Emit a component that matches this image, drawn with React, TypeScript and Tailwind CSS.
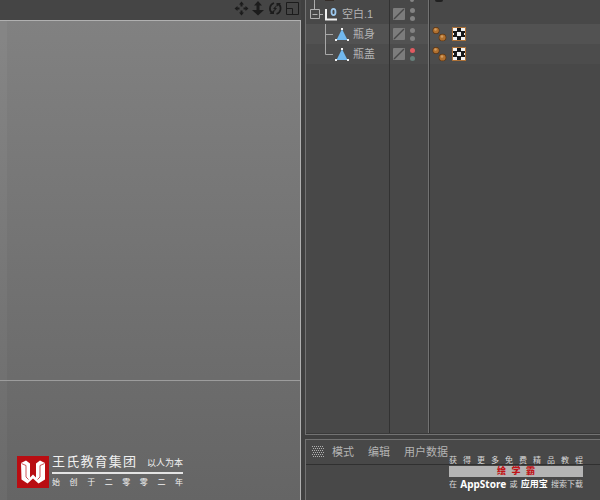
import type { ReactNode } from 'react';

type NodeState = 'default' | 'hidden';

interface SceneNode {
  id: string;
  name: string;
  state: NodeState;
  last: boolean;
}

const children: SceneNode[] = [
  { id: 'body', name: '瓶身', state: 'default', last: false },
  { id: 'cap', name: '瓶盖', state: 'hidden', last: true },
];

const menus = ['模式', '编辑', '用户数据'];

export default function App() {
  return (
    <div className="grid h-screen grid-cols-[301fr_299fr] grid-rows-[minmax(0,1fr)] overflow-hidden bg-[#404040] font-['Liberation_Sans','Noto_Sans_CJK_SC',sans-serif] text-[#b4b4b4]">
      <Viewport />
      <div className="flex min-w-0 flex-col gap-1 pl-1">
        <ObjectManager />
        <AttributePanel />
      </div>
    </div>
  );
}

function Viewport() {
  return (
    <main className="relative flex min-w-0 flex-col border-r border-[#b0b0b0]">
      <div className="-mr-px flex h-5 shrink-0 items-start justify-end gap-px bg-[#454545] pr-px">
        <ViewButton label="平移">
          <path d="M8.500 1.500 11 4.500H9.500V6.500h-2V4.500H6zM8.500 15.500l2.500-3H9.500V10.500h-2v2H6zM1.500 8.500 4.500 6v1.500h2v2h-2V11zM15.500 8.500 12.500 6v1.500h-2v2h2V11z" fill="currentColor" />
        </ViewButton>
        <ViewButton label="缩放">
          <path d="M8 1l4 4.500H9.500v4.500H14L8 15.500 2 10h4.500V5.500H4z" fill="currentColor" />
        </ViewButton>
        <ViewButton label="旋转">
          <path d="M7 3A5.800 5.800 0 0 0 5 13M9.500 14A5.800 5.800 0 0 0 11.500 4" fill="none" stroke="currentColor" strokeWidth="1.700" />
          <path d="M2.500 14h4.500v-4zM14 3H9.500v4zM9 5.500 6 9h1.500L7 12l3-4H8.500z" fill="currentColor" />
        </ViewButton>
        <ViewButton label="切换视图">
          <path d="M2.500 2.500h12v12h-12zM2.500 8.500h6v6" fill="none" stroke="currentColor" />
        </ViewButton>
      </div>
      <div className="flex min-h-0 flex-1 border-t border-[#b0b0b0] bg-linear-to-b from-[#818181] to-[#656565]">
        <div className="w-[7px] bg-white/4" />
      </div>
      <div className="absolute inset-x-0 bottom-[119px] h-px bg-[#9c9c9c]" />
      <CompanyMark />
    </main>
  );
}

function ViewButton({ label, children }: { label: string; children: ReactNode }) {
  return (
    <button aria-label={label} className="text-[#1c1c1c]">
      <svg viewBox="0 0 16 16" className="block size-4">
        {children}
      </svg>
    </button>
  );
}

function Spread({ text, className }: { text: string; className: string }) {
  return (
    <p className={`flex justify-between whitespace-nowrap ${className}`}>
      {Array.from(text).map((char, i) => (
        <span key={i}>{char}</span>
      ))}
    </p>
  );
}

function CompanyMark() {
  return (
    <div className="absolute bottom-3 left-[17px] flex items-end gap-[3px] text-[#f0f0f0]">
      <svg viewBox="0 0 32 32" className="size-8 shrink-0">
        <path d="M0 0h32v32H0z" fill="#b90d12" />
        <path d="M4 7 9 4.500 13 7.500V21.500L16 18.500 19 21.500V7.500L23 4.500 28 7V23.500L21.500 27.500 16 22.500 10.500 27.500 4.500 23.500z" fill="#fff" />
        <path d="M4.500 7.500 9 9.500V21l2.500 2.500M27.500 7.500 23 9.500V21l-2.500 2.500" fill="none" stroke="#b90d12" strokeWidth=".7" />
      </svg>
      <div className="w-[131px]">
        <div className="flex items-end justify-between border-b-2 border-[#e4e4e4] pb-1">
          <Spread text="王氏教育集团" className="w-[84px] text-[13px] leading-[13px]" />
          <p className="text-[9px] leading-[9px]">以人为本</p>
        </div>
        <Spread text="始创于二零零二年" className="pt-1 text-[8px] leading-[10px]" />
      </div>
    </div>
  );
}

function ManagerRow({
  className,
  name,
  layer,
  tags,
}: {
  className: string;
  name?: ReactNode;
  layer?: ReactNode;
  tags?: ReactNode;
}) {
  return (
    <li className={`grid grid-cols-[84px_39px_1fr] ${className}`}>
      <div className="flex items-center overflow-hidden border-r border-[#323232]">{name}</div>
      <div className="flex items-center gap-1 overflow-hidden border-r border-[#727272] pl-[3px]">{layer}</div>
      <div className="flex items-center gap-1 overflow-hidden border-l border-[#323232] pl-px">{tags}</div>
    </li>
  );
}

function ObjectManager() {
  return (
    <section className="flex min-h-0 flex-1 border-b border-l border-[#727272] bg-[#484848]">
      <ul className="flex min-w-0 flex-1 flex-col border-b border-[#3a3a3a]">
        {/* Bottom edge of the row scrolled out of view */}
        <ManagerRow
          className="h-1"
          name={
            <svg viewBox="0 0 84 4" className="h-1 w-[84px] shrink-0">
              <path d="M8.500 0v4" stroke="#a8a8a8" />
              <path d="M19 0h9v1h-9z" fill="#342d29" />
            </svg>
          }
          layer={<span className="ml-[17px] h-0.5 w-1 self-start rounded-b-full bg-[#858585]" />}
          tags={<span className="ml-1 h-0.5 w-2 self-start rounded-b-full bg-[#202020]" />}
        />
        <ManagerRow
          className="h-5"
          name={
            <>
              <button aria-label="折叠" className="shrink-0">
                <svg viewBox="0 0 18 20" className="block h-5 w-[18px]">
                  <path d="M8.500 0v5M4.500 5.500h9v9h-9zM6.500 10.500h5M14 10.500h3" fill="none" stroke="#b0b0b0" />
                </svg>
              </button>
              <svg viewBox="0 0 18 20" className="h-5 w-[18px] shrink-0">
                <path d="M2 5v10.500H13" fill="none" stroke="#f0f0f0" strokeWidth="2" />
                <ellipse cx="9.500" cy="8" rx="2" ry="3.200" fill="none" stroke="#9cc8ee" strokeWidth="1.800" />
              </svg>
              <NodeName>空白.1</NodeName>
            </>
          }
          layer={<LayerControls state="default" />}
        />
        {children.map((node) => (
          <ManagerRow
            key={node.id}
            className={node.last ? 'h-5 bg-[#4c4c4c]' : 'h-5 bg-[#525252]'}
            name={
              <>
                <svg viewBox="0 0 47 20" className="h-5 w-[47px] shrink-0">
                  <path d={node.last ? 'M19.500 0v10.500H27' : 'M19.500 0v20M19.500 10.500H27'} fill="none" stroke="#a8a8a8" />
                  <path d="M36 5 41.500 16h-11z" fill="#71b8ee" />
                  <path d="M35 4h2v2h-2zM29 15h2v2h-2zM41 15h2v2h-2z" fill="#f4f4f4" />
                </svg>
                <NodeName>{node.name}</NodeName>
              </>
            }
            layer={<LayerControls state={node.state} />}
            tags={
              <>
                <PhongTag />
                <TextureTag />
              </>
            }
          />
        ))}
        <ManagerRow className="flex-1" />
      </ul>
    </section>
  );
}

function NodeName({ children }: { children: ReactNode }) {
  return <button className="whitespace-nowrap text-[11px] leading-5">{children}</button>;
}

function LayerControls({ state }: { state: NodeState }) {
  return (
    <>
      <button aria-label="图层">
        <svg viewBox="0 0 12 12" className="block size-3">
          <rect width="12" height="12" rx="1" fill="#7c7c7c" />
          <path d="M1 11 11 1" stroke="#484848" strokeWidth="1.500" />
        </svg>
      </button>
      <button aria-label="可见性" className="flex w-[7px] flex-col items-center gap-[3px]">
        <span className={`size-[5px] rounded-full ${state === 'hidden' ? 'bg-[#e05a60]' : 'bg-[#828282]'}`} />
        <span className={`size-[5px] rounded-full ${state === 'hidden' ? 'bg-[#66807b]' : 'bg-[#828282]'}`} />
      </button>
    </>
  );
}

function PhongTag() {
  return (
    <button aria-label="平滑着色标签">
      <svg viewBox="0 0 16 16" className="block size-4">
        <circle cx="5" cy="4.500" r="3.500" fill="#5c3615" />
        <circle cx="5" cy="4.500" r="2.800" fill="#b0702f" />
        <circle cx="4.500" cy="3.500" r="1.200" fill="#d09c60" />
        <circle cx="11.500" cy="11.500" r="3.800" fill="#5c3615" />
        <circle cx="11.500" cy="11.500" r="3.100" fill="#b0702f" />
        <circle cx="11" cy="10.500" r="1.300" fill="#d09c60" />
      </svg>
    </button>
  );
}

function TextureTag() {
  return (
    <button aria-label="纹理标签">
      <svg viewBox="0 0 16 16" className="block size-4">
        <path d="M1 1h14v14H1z" fill="#ad7238" />
        <path d="M2 2h12v12H2z" fill="#17191b" />
        <path d="M2 2h4v3H2zM10 2h4v3h-4zM6 6h4v4H6zM2 11h4v3H2zM10 11h4v3h-4zM2 7h1v2H2zM13 7h1v2h-1z" fill="#f2f2f2" />
      </svg>
    </button>
  );
}

function AttributePanel() {
  return (
    <section className="relative h-[61px] shrink-0 border-l border-t border-[#727272] bg-[#484848]">
      <nav className="flex h-[25px] items-center gap-3.5 border-b border-[#303030] pl-1.5">
        <svg viewBox="0 0 12 12" className="-mr-1.5 size-3 shrink-0 text-[#b0b0b0]">
          {[0, 2, 4, 6, 8, 10].map((y) => (
            <path key={y} d={`M${y % 4 ? 1 : 0} ${y + 0.5}h12`} stroke="currentColor" strokeDasharray="1 1" />
          ))}
        </svg>
        {menus.map((menu) => (
          <button key={menu} className="whitespace-nowrap text-[11px] leading-4">
            {menu}
          </button>
        ))}
      </nav>
      <DownloadMark />
    </section>
  );
}

function DownloadMark() {
  return (
    <div className="absolute bottom-2.5 right-[17px] w-[134px] text-[#d8d8d8]">
      <Spread text="获得更多免费精品教程" className="text-[8px] leading-[11px]" />
      <div className="flex h-[11px] items-center justify-center bg-[#b4b4b4]">
        <Spread text="绘学霸" className="w-[38px] text-[9px] font-black leading-[11px] text-[#c01418]" />
      </div>
      <p className="flex items-center justify-between whitespace-nowrap pt-0.5 text-[8px] leading-[11px]">
        <span>在</span>
        <span className="font-['Noto_Sans',sans-serif] text-[10px] font-bold text-white">AppStore</span>
        <span>或</span>
        <span className="text-[9px] font-bold text-white">应用宝</span>
        <span>搜索下载</span>
      </p>
    </div>
  );
}
